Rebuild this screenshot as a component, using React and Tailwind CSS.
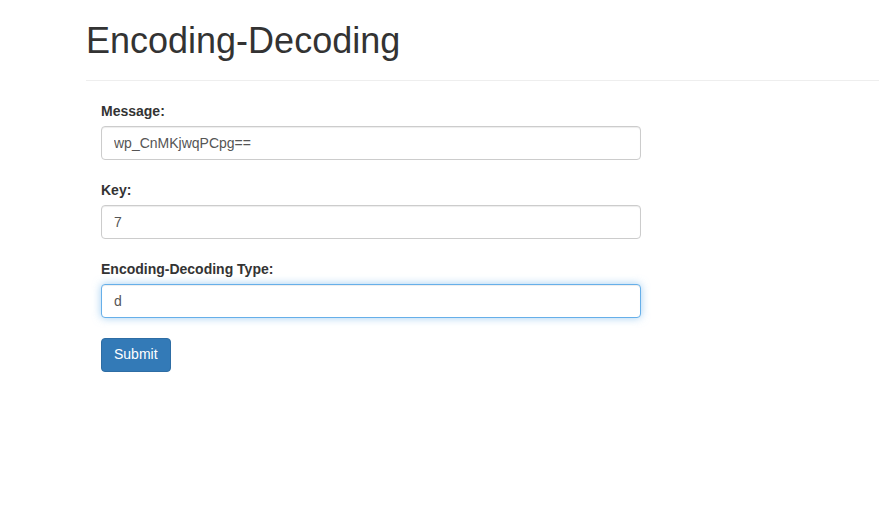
import { useState } from 'react';

// Formulaire d'encodage / decodage, style Bootstrap 3.

const font = { fontFamily: '"Liberation Sans", Arial, sans-serif' };

function Champ({ label, value, onChange, focus }) {
  return (
    <div className="mb-[20px]">
      <label className="block text-[14px] leading-[20px] font-bold text-[#333] mb-[5px]">
        {label}
      </label>
      <input
        type="text"
        value={value}
        onChange={(e) => onChange(e.target.value)}
        className={`block w-[540px] h-[34px] px-[12px] text-[14px] text-[#555] bg-white rounded-[4px] border outline-none ${
          focus
            ? 'border-[#66afe9] shadow-[inset_0_1px_1px_rgba(0,0,0,0.075),0_0_8px_rgba(102,175,233,0.6)]'
            : 'border-[#ccc] shadow-[inset_0_1px_1px_rgba(0,0,0,0.075)]'
        }`}
      />
    </div>
  );
}

export default function App() {
  const [message, setMessage] = useState('wp_CnMKjwqPCpg==');
  const [cle, setCle] = useState('7');
  const [type, setType] = useState('d');

  return (
    <div className="min-h-[514px] bg-white pl-[86px] pr-px" style={font}>
      <div className="border-b border-[#eee] pb-[9px]">
        <h1 className="mt-[21px] mb-[10px] text-[36px] leading-[1.1] text-[#333] font-normal">
          Encoding-Decoding
        </h1>
      </div>
      <form className="pl-[15px] pt-[20px]" onSubmit={(e) => e.preventDefault()}>
        <Champ label="Message:" value={message} onChange={setMessage} />
        <Champ label="Key:" value={cle} onChange={setCle} />
        <Champ label="Encoding-Decoding Type:" value={type} onChange={setType} focus />
        <button
          type="submit"
          className="h-[34px] px-[12px] text-[14px] text-white bg-[#337ab7] border border-[#2e6da4] rounded-[4px]"
        >
          Submit
        </button>
      </form>
    </div>
  );
}
